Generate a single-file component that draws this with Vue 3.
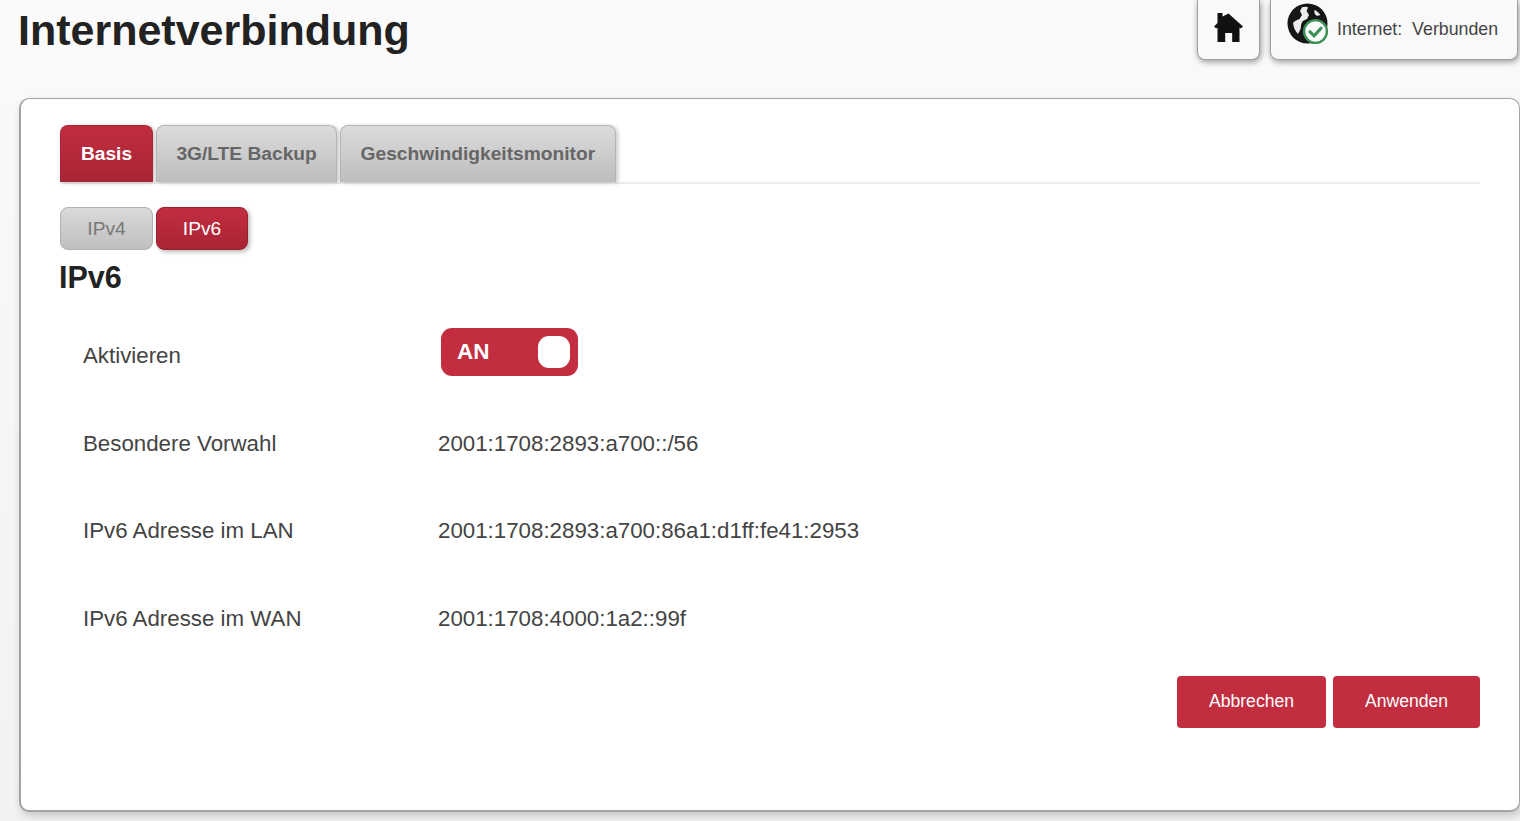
<script setup>
const tabs = [
  { label: 'Basis', active: true },
  { label: '3G/LTE Backup', active: false },
  { label: 'Geschwindigkeitsmonitor', active: false }
]
const subTabs = [
  { label: 'IPv4', active: false },
  { label: 'IPv6', active: true }
]
const rows = [
  { label: 'Besondere Vorwahl', value: '2001:1708:2893:a700::/56' },
  { label: 'IPv6 Adresse im LAN', value: '2001:1708:2893:a700:86a1:d1ff:fe41:2953' },
  { label: 'IPv6 Adresse im WAN', value: '2001:1708:4000:1a2::99f' }
]
</script>

<template>
  <div class="page">
    <header class="header">
      <h1 class="title">Internetverbindung</h1>
      <div class="status-group">
        <div class="chip home">
          <svg width="30" height="30" viewBox="0 0 30 30">
            <path fill="#111" d="M3.5 1 H8.5 V4.5 L14.5 1.5 L29 14.5 L26.8 16.6 L25.5 15.6 V30 H18.2 V21 H11.2 V30 H3.5 V15.6 L2.2 16.6 L0 14.5 L3.5 11 Z" />
          </svg>
        </div>
        <div class="chip internet">
          <svg class="globe" width="42" height="42" viewBox="0 0 42 42">
            <circle cx="20.5" cy="20.5" r="20" fill="#161616" />
            <path fill="#ececec" d="M15 4.2 C17.5 3.5 19.5 3.5 21 4.3 L19.6 8 L22 12 L20 16 L15.8 18 L14.2 21 L13.6 26 L11 31 C8 28 6.2 24 6.1 19.6 L9 17.4 L12.5 16 L15 12 L13 8 Z" />
            <path fill="#ececec" d="M27.5 7 C29.8 8 31.8 9.6 33.2 11.8 C31.6 13.4 29.4 13 28.2 11.6 C27.3 10.2 27.2 8.6 27.5 7 Z" />
            <circle cx="28.5" cy="28.5" r="11.4" fill="#fbfbfb" stroke="#3c8f55" stroke-width="2.4" />
            <path fill="none" stroke="#3c8f55" stroke-width="3.2" stroke-linecap="round" stroke-linejoin="round" d="M23 28.8 L27.2 32.8 L34 25.2" />
          </svg>
          <span class="status-text">Internet:&nbsp; Verbunden</span>
        </div>
      </div>
    </header>

    <main class="card">
      <nav class="tabs">
        <div v-for="t in tabs" :key="t.label" class="tab" :class="{ on: t.active }">{{ t.label }}</div>
      </nav>
      <div class="subtabs">
        <div v-for="t in subTabs" :key="t.label" class="subtab" :class="{ on: t.active }">{{ t.label }}</div>
      </div>
      <h2 class="heading">IPv6</h2>

      <div class="rows">
        <div class="row">
          <span class="label">Aktivieren</span>
          <div class="toggle">
            <span class="toggle-text">AN</span>
            <span class="knob"></span>
          </div>
        </div>
        <div v-for="r in rows" :key="r.label" class="row">
          <span class="label">{{ r.label }}</span>
          <span class="value">{{ r.value }}</span>
        </div>
      </div>

      <div class="actions">
        <button class="btn cancel">Abbrechen</button>
        <button class="btn apply">Anwenden</button>
      </div>
    </main>
  </div>
</template>

<style>
html, body {
  margin: 0;
  overflow: hidden;
  background: #f8f8f8;
}
</style>

<style scoped>
.page {
  box-sizing: border-box;
  width: 1520px;
  height: 821px;
  overflow: hidden;
  font-family: "Liberation Sans", Arial, sans-serif;
  background: linear-gradient(180deg, #fafafa 0%, #f2f2f2 100%);
}
.header {
  display: flex;
  justify-content: space-between;
  align-items: flex-start;
  height: 98px;
  padding: 0 2px 0 18px;
  box-sizing: border-box;
}
.title {
  margin: 5px 0 0;
  font-size: 43px;
  line-height: 50px;
  font-weight: 700;
  color: #222;
}
.status-group {
  display: flex;
  gap: 10px;
}
.chip {
  box-sizing: border-box;
  height: 60px;
  display: flex;
  align-items: center;
  background: #f9f9f9;
  border: 1px solid #a0a0a0;
  border-top: none;
  border-radius: 0 0 8px 8px;
  box-shadow: 1px 2px 6px rgba(0, 0, 0, 0.4);
}
.home {
  width: 63px;
  justify-content: center;
  padding-bottom: 6px;
}
.internet {
  width: 248px;
  padding-left: 16px;
  gap: 8px;
}
.globe {
  align-self: flex-start;
  margin-top: 3px;
  flex: none;
}
.status-text {
  font-size: 17.8px;
  color: #444;
  white-space: nowrap;
}
.card {
  box-sizing: border-box;
  width: 1501px;
  height: 714px;
  margin-left: 19px;
  padding: 26px 39px 0 39px;
  background: #fff;
  border: 2px solid #a3a3a3;
  border-width: 1px 1px 2px 2px;
  border-radius: 10px;
  box-shadow: 2px 4px 8px rgba(0, 0, 0, 0.18);
}
.tabs {
  display: flex;
  gap: 3px;
  height: 59px;
  box-sizing: border-box;
  border-bottom: 2px solid #eee;
}
.tab {
  box-sizing: border-box;
  height: 57px;
  min-width: 93px;
  padding: 0 19.4px 1px;
  display: flex;
  align-items: center;
  justify-content: center;
  font-size: 19.2px;
  font-weight: 700;
  color: #666;
  background: linear-gradient(180deg, #dcdcdc 0%, #bdbdbd 100%);
  border: 1px solid #b4b4b4;
  border-bottom: none;
  border-radius: 8px 8px 0 0;
  box-shadow: 2px 1px 4px rgba(0, 0, 0, 0.22);
}
.tab.on {
  color: #fff;
  background: linear-gradient(180deg, #c22d40 0%, #a82435 100%);
  border-color: #a82435;
}
.subtabs {
  display: flex;
  gap: 3px;
  margin-top: 23px;
}
.subtab {
  box-sizing: border-box;
  width: 93px;
  height: 43px;
  display: flex;
  align-items: center;
  justify-content: center;
  font-size: 19.2px;
  color: #777;
  background: linear-gradient(180deg, #dadada 0%, #bfbfbf 100%);
  border: 1px solid #b0b0b0;
  border-radius: 8px;
}
.subtab.on {
  width: 92px;
  color: #fff;
  background: linear-gradient(180deg, #c22d40 0%, #a82435 100%);
  border-color: #98202f;
  box-shadow: 2px 2px 4px rgba(0, 0, 0, 0.28);
}
.heading {
  margin: 9px 0 0 -1px;
  font-size: 30.5px;
  line-height: 36px;
  font-weight: 700;
  color: #222;
}
.rows {
  margin-top: 17px;
  display: flex;
  flex-direction: column;
}
.row {
  display: grid;
  grid-template-columns: 355px 1fr;
  align-items: center;
  height: 87.5px;
  padding-left: 23px;
  font-size: 22.3px;
  color: #444;
}
.row:first-child {
  height: 88px;
}
.label,
.value {
  white-space: nowrap;
}
.toggle {
  box-sizing: border-box;
  width: 137px;
  height: 48px;
  margin: -9px 0 0 3px;
  padding: 0 8px 0 16px;
  display: flex;
  align-items: center;
  justify-content: space-between;
  background: #c22d40;
  border-radius: 11px;
}
.toggle-text {
  font-size: 22.5px;
  font-weight: 700;
  color: #fff;
}
.knob {
  width: 32px;
  height: 32px;
  background: #fff;
  border-radius: 11px;
}
.actions {
  display: flex;
  justify-content: flex-end;
  gap: 7px;
  margin-top: 13px;
}
.btn {
  height: 52px;
  border: none;
  border-radius: 4px;
  background: #c22d40;
  color: #fff;
  font-family: inherit;
  font-size: 17.6px;
  padding: 0 0 1px;
}
.cancel {
  width: 149px;
}
.apply {
  width: 147px;
}
</style>
